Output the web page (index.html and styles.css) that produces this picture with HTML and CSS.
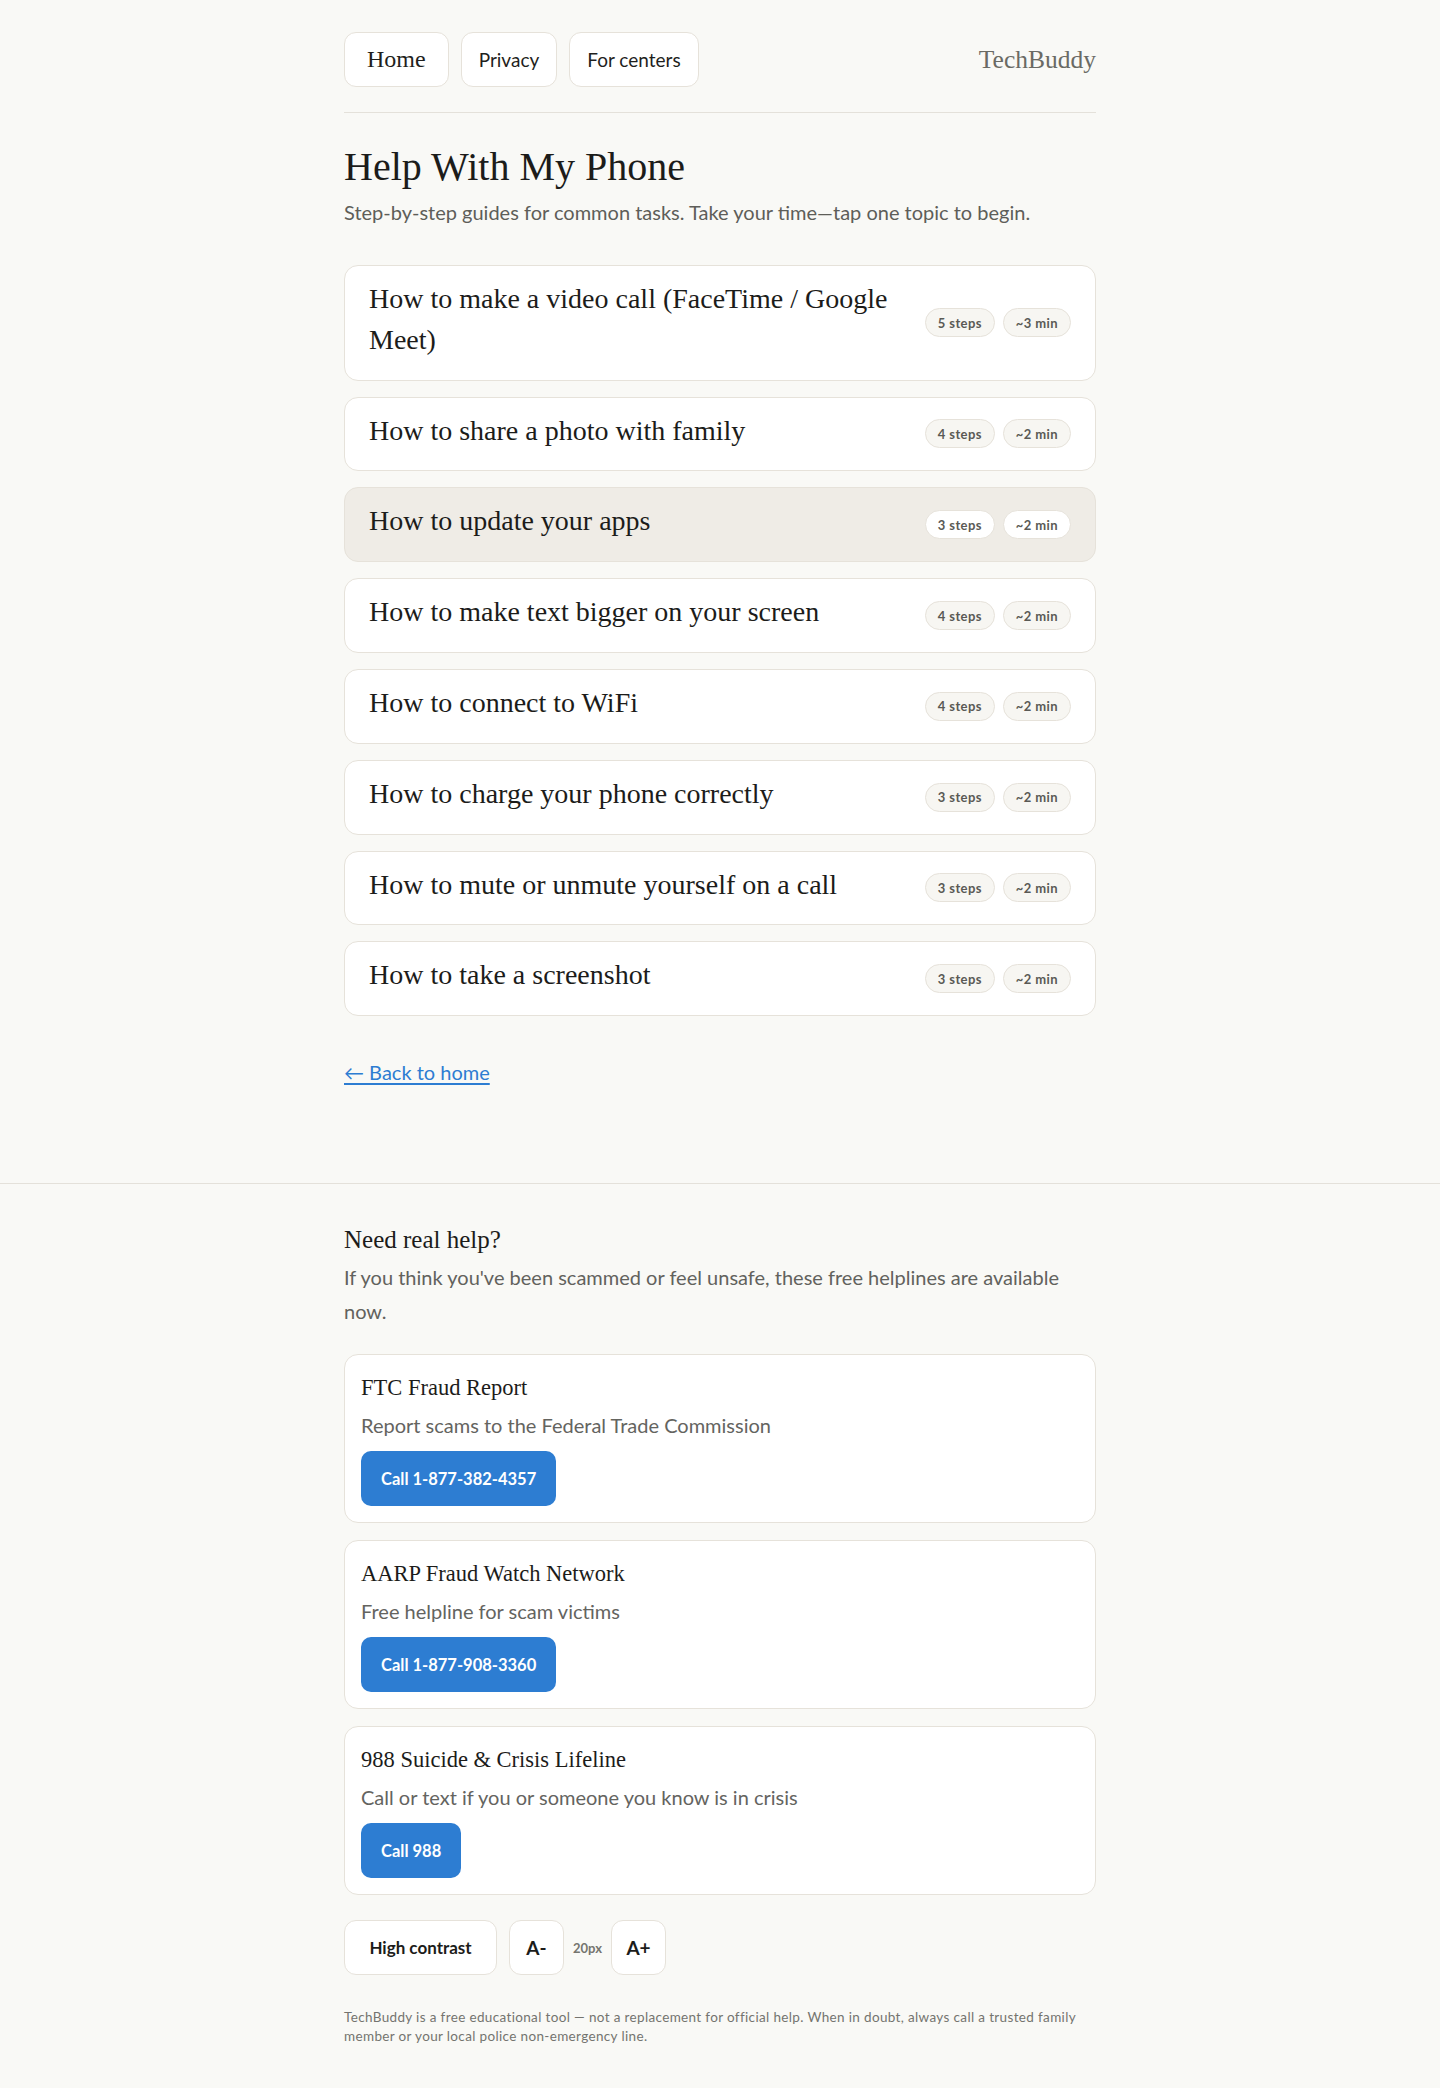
FILE: index.html
```html
<!DOCTYPE html>
<html lang="en">
<head>
<meta charset="utf-8">
<title>Help With My Phone – TechBuddy</title>
<link rel="stylesheet" href="styles.css">
</head>
<body>
<main class="page">
  <header class="topbar">
    <nav class="nav">
      <a class="nav-btn nav-home" href="#">Home</a>
      <a class="nav-btn" href="#">Privacy</a>
      <a class="nav-btn" href="#">For centers</a>
    </nav>
    <div class="brand">TechBuddy</div>
  </header>

  <h1 class="title">Help With My Phone</h1>
  <p class="subtitle">Step-by-step guides for common tasks. Take your time—tap one topic to begin.</p>

  <ul class="guides">
    <li class="guide"><span class="guide-name">How to make a video call (FaceTime / Google Meet)</span><span class="badges"><span class="badge">5 steps</span><span class="badge">~3 min</span></span></li>
    <li class="guide"><span class="guide-name">How to share a photo with family</span><span class="badges"><span class="badge">4 steps</span><span class="badge">~2 min</span></span></li>
    <li class="guide guide-active"><span class="guide-name">How to update your apps</span><span class="badges"><span class="badge">3 steps</span><span class="badge">~2 min</span></span></li>
    <li class="guide"><span class="guide-name">How to make text bigger on your screen</span><span class="badges"><span class="badge">4 steps</span><span class="badge">~2 min</span></span></li>
    <li class="guide"><span class="guide-name">How to connect to WiFi</span><span class="badges"><span class="badge">4 steps</span><span class="badge">~2 min</span></span></li>
    <li class="guide"><span class="guide-name">How to charge your phone correctly</span><span class="badges"><span class="badge">3 steps</span><span class="badge">~2 min</span></span></li>
    <li class="guide"><span class="guide-name">How to mute or unmute yourself on a call</span><span class="badges"><span class="badge">3 steps</span><span class="badge">~2 min</span></span></li>
    <li class="guide"><span class="guide-name">How to take a screenshot</span><span class="badges"><span class="badge">3 steps</span><span class="badge">~2 min</span></span></li>
  </ul>

  <a class="back-link" href="#">← Back to home</a>
</main>

<footer class="help">
  <div class="help-inner">
    <h2 class="help-title">Need real help?</h2>
    <p class="help-intro">If you think you've been scammed or feel unsafe, these free helplines are available now.</p>

    <div class="lines">
      <section class="line-card">
        <h3 class="line-name">FTC Fraud Report</h3>
        <p class="line-desc">Report scams to the Federal Trade Commission</p>
        <a class="call-btn" href="#">Call 1-877-382-4357</a>
      </section>
      <section class="line-card">
        <h3 class="line-name">AARP Fraud Watch Network</h3>
        <p class="line-desc">Free helpline for scam victims</p>
        <a class="call-btn" href="#">Call 1-877-908-3360</a>
      </section>
      <section class="line-card">
        <h3 class="line-name">988 Suicide &amp; Crisis Lifeline</h3>
        <p class="line-desc">Call or text if you or someone you know is in crisis</p>
        <a class="call-btn" href="#">Call 988</a>
      </section>
    </div>

    <div class="controls">
      <button class="ctrl-btn ctrl-wide" type="button">High contrast</button>
      <button class="ctrl-btn ctrl-sq" type="button">A-</button>
      <span class="size-label">20px</span>
      <button class="ctrl-btn ctrl-sq" type="button">A+</button>
    </div>

    <p class="disclaimer">TechBuddy is a free educational tool — not a replacement for official help. When in doubt, always call a trusted family member or your local police non-emergency line.</p>
  </div>
</footer>
</body>
</html>
```

FILE: styles.css
```css
* { box-sizing: border-box; }

html, body {
  margin: 0;
  padding: 0;
  background: #f9f9f6;
  color: #1f1f1d;
  font-family: "Lato", "Liberation Sans", sans-serif;
}

.page {
  max-width: 752px;
  margin: 0 auto;
  padding: 32px 0 96px;
}

.topbar {
  display: flex;
  align-items: center;
  justify-content: space-between;
  padding-bottom: 25px;
  border-bottom: 1px solid #e4e1da;
}

.nav {
  display: flex;
  gap: 12px;
}

.nav-btn {
  display: flex;
  align-items: center;
  height: 55px;
  padding: 0 17px;
  background: #ffffff;
  border: 1px solid #e6e2da;
  border-radius: 12px;
  color: #1f1f1d;
  text-decoration: none;
  font-size: 19px;
}

.nav-home {
  padding: 0 22px;
  font-family: "Liberation Serif", serif;
  font-size: 24px;
}

.brand {
  font-family: "Liberation Serif", serif;
  font-size: 25.5px;
  color: #6a6a64;
}

.title {
  margin: 30px 0 0;
  font-family: "Liberation Serif", serif;
  font-weight: 400;
  font-size: 40px;
  line-height: 48px;
  color: #1c1c1a;
}

.subtitle {
  margin: 6px 0 0;
  font-size: 20px;
  line-height: 30px;
  color: #5e5e59;
}

.guides {
  list-style: none;
  margin: 38px 0 0;
  padding: 0;
  display: flex;
  flex-direction: column;
  gap: 16px;
}

.guide {
  display: flex;
  align-items: center;
  justify-content: space-between;
  gap: 24px;
  padding: 16px 24px;
  background: #ffffff;
  border: 1px solid #e6e2da;
  border-radius: 14px;
}

.guide-active {
  background: #efece6;
}

.guide-name {
  margin: -3px 0 3px;
  font-family: "Liberation Serif", serif;
  font-size: 28px;
  line-height: 40.8px;
  color: #1c1c1a;
}

.badges {
  display: flex;
  gap: 8px;
  flex-shrink: 0;
}

.badge {
  display: inline-flex;
  align-items: center;
  height: 29px;
  padding: 0 12px;
  background: #f7f6f2;
  border: 1px solid #e6e2da;
  border-radius: 999px;
  font-size: 13px;
  font-weight: 700;
  letter-spacing: 0.4px;
  color: #5a5a55;
}

.guide-active .badge {
  background: #ffffff;
}

.back-link {
  display: inline-block;
  margin-top: 41px;
  font-size: 20px;
  line-height: 30px;
  color: #2d7dd2;
  text-decoration: underline;
  text-underline-offset: 3px;
}

.help {
  border-top: 1px solid #e4e1da;
  padding: 41px 0 44px;
}

.help-inner {
  max-width: 752px;
  margin: 0 auto;
}

.help-title {
  margin: 0;
  font-family: "Liberation Serif", serif;
  font-weight: 400;
  font-size: 25px;
  line-height: 29px;
  color: #1c1c1a;
}

.help-intro {
  margin: 6px 0 0;
  font-size: 20px;
  line-height: 34px;
  color: #62625d;
}

.lines {
  margin-top: 26px;
  display: flex;
  flex-direction: column;
  gap: 17px;
}

.line-card {
  display: flex;
  flex-direction: column;
  align-items: flex-start;
  padding: 17px 16px 16px;
  background: #ffffff;
  border: 1px solid #e6e2da;
  border-radius: 14px;
}

.line-name {
  margin: 0;
  font-family: "Liberation Serif", serif;
  font-weight: 400;
  font-size: 22.5px;
  line-height: 31px;
  color: #1c1c1a;
}

.line-desc {
  margin: 8px 0 0;
  font-size: 20px;
  line-height: 28px;
  color: #64645f;
}

.call-btn {
  display: inline-flex;
  align-items: center;
  height: 55px;
  margin-top: 12px;
  padding: 0 20px;
  background: #2d7dd2;
  border-radius: 10px;
  color: #ffffff;
  font-size: 16.5px;
  font-weight: 700;
  text-decoration: none;
}

.controls {
  margin-top: 25px;
  display: flex;
  align-items: center;
  gap: 9px;
}

.ctrl-btn {
  height: 55px;
  padding: 0;
  background: #ffffff;
  border: 1px solid #e6e2da;
  border-radius: 12px;
  font-family: "Lato", "Liberation Sans", sans-serif;
  font-weight: 700;
  color: #1c1c1a;
}

.ctrl-wide {
  width: 153px;
  margin-right: 3px;
  font-size: 17px;
}

.ctrl-sq {
  width: 55px;
  font-size: 19px;
}

.size-label {
  font-size: 13px;
  font-weight: 700;
  color: #75756f;
}

.disclaimer {
  margin: 33px 0 0;
  font-size: 13.5px;
  line-height: 18.5px;
  letter-spacing: 0.35px;
  color: #74746f;
}
```
